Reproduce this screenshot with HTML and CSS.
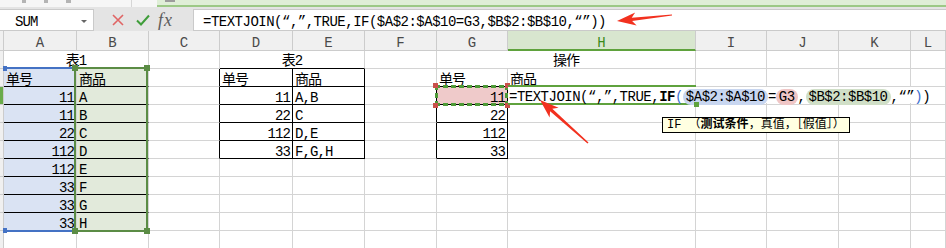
FILE: index.html
```html
<!DOCTYPE html>
<html lang="zh-CN">
<head>
    <meta charset="UTF-8">
    <title>TEXTJOIN</title>
    <link rel="stylesheet" href="styles.css">
</head>
<body>
<div class="app">
    <div class="topbar">
        <div class="tools"><i class="nub n1"></i><i class="nub n2"></i><i class="nub n3"></i><i class="sep"></i></div>
        <div class="tab"><i class="nub n4"></i></div>
    </div>

    <div class="fbar">
        <div class="namebox"><span>SUM</span><span class="caret"></span></div>
        <div class="fbtns">
            <svg width="12" height="12" viewBox="0 0 12 12"><path d="M1 1L11 11M11 1L1 11" stroke="#e06464" stroke-width="1.6" fill="none"/></svg>
            <svg width="14" height="13" viewBox="0 0 14 13"><path d="M1 6.5L5 10.5L13 1.5" stroke="#3f9d3a" stroke-width="2" fill="none"/></svg>
            <span class="fx">fx</span>
        </div>
        <div class="finput">=TEXTJOIN(“,”,TRUE,IF($A$2:$A$10=G3,$B$2:$B$10,“”))</div>
    </div>

    <div class="sheet">
        <div class="corner"></div>
        <div class="ch">A</div><div class="ch">B</div><div class="ch">C</div><div class="ch">D</div>
        <div class="ch">E</div><div class="ch">F</div><div class="ch">G</div><div class="ch on">H</div>
        <div class="ch">I</div><div class="ch">J</div><div class="ch">K</div><div class="ch">L</div>

        <!-- 1 -->
        <div class="rh"></div>
        <div class="c m2 t1">表1</div>
        <div class="c"></div>
        <div class="c m2 t1 kb">表2</div>
        <div class="c"></div>
        <div class="c m2 t1">操作</div>
        <div class="c"></div><div class="c"></div><div class="c"></div><div class="c"></div>

        <!-- 2 -->
        <div class="rh"></div>
        <div class="c fa kb">单号</div>
        <div class="c fb kb">商品</div>
        <div class="c kr"></div>
        <div class="c kb kr">单号</div>
        <div class="c kb kr">商品</div>
        <div class="c"></div>
        <div class="c kb">单号</div>
        <div class="c">商品</div>
        <div class="c"></div><div class="c"></div><div class="c"></div><div class="c"></div>

        <!-- 3 -->
        <div class="rh on"></div>
        <div class="c fa kb r">11</div>
        <div class="c fb kb">A</div>
        <div class="c kr"></div>
        <div class="c kb kr r">11</div>
        <div class="c kb kr">A,B</div>
        <div class="c kr"></div>
        <div class="c kb kr r fg">11</div>
        <div class="c"></div>
        <div class="c"></div><div class="c"></div><div class="c"></div><div class="c"></div>

        <!-- 4 -->
        <div class="rh"></div>
        <div class="c fa kb r">11</div>
        <div class="c fb kb">B</div>
        <div class="c kr"></div>
        <div class="c kb kr r">22</div>
        <div class="c kb kr">C</div>
        <div class="c kr"></div>
        <div class="c kb kr r">22</div>
        <div class="c"></div>
        <div class="c"></div><div class="c"></div><div class="c"></div><div class="c"></div>

        <!-- 5 -->
        <div class="rh"></div>
        <div class="c fa kb r">22</div>
        <div class="c fb kb">C</div>
        <div class="c kr"></div>
        <div class="c kb kr r">112</div>
        <div class="c kb kr">D,E</div>
        <div class="c kr"></div>
        <div class="c kb kr r">112</div>
        <div class="c"></div>
        <div class="c"></div><div class="c"></div><div class="c"></div><div class="c"></div>

        <!-- 6 -->
        <div class="rh"></div>
        <div class="c fa kb r">112</div>
        <div class="c fb kb">D</div>
        <div class="c kr"></div>
        <div class="c kb kr r">33</div>
        <div class="c kb kr">F,G,H</div>
        <div class="c kr"></div>
        <div class="c kb kr r">33</div>
        <div class="c"></div>
        <div class="c"></div><div class="c"></div><div class="c"></div><div class="c"></div>

        <!-- 7 -->
        <div class="rh"></div>
        <div class="c fa kb r">112</div>
        <div class="c fb kb">E</div>
        <div class="c"></div><div class="c"></div><div class="c"></div><div class="c"></div><div class="c"></div>
        <div class="c"></div><div class="c"></div><div class="c"></div><div class="c"></div><div class="c"></div>

        <!-- 8 -->
        <div class="rh"></div>
        <div class="c fa kb r">33</div>
        <div class="c fb kb">F</div>
        <div class="c"></div><div class="c"></div><div class="c"></div><div class="c"></div><div class="c"></div>
        <div class="c"></div><div class="c"></div><div class="c"></div><div class="c"></div><div class="c"></div>

        <!-- 9 -->
        <div class="rh"></div>
        <div class="c fa kb r">33</div>
        <div class="c fb kb">G</div>
        <div class="c"></div><div class="c"></div><div class="c"></div><div class="c"></div><div class="c"></div>
        <div class="c"></div><div class="c"></div><div class="c"></div><div class="c"></div><div class="c"></div>

        <!-- 10 -->
        <div class="rh"></div>
        <div class="c fa r">33</div>
        <div class="c fb">H</div>
        <div class="c"></div><div class="c"></div><div class="c"></div><div class="c"></div><div class="c"></div>
        <div class="c"></div><div class="c"></div><div class="c"></div><div class="c"></div><div class="c"></div>

        <!-- 11 -->
        <div class="rh"></div>
        <div class="c"></div><div class="c"></div><div class="c"></div><div class="c"></div><div class="c"></div><div class="c"></div>
        <div class="c"></div><div class="c"></div><div class="c"></div><div class="c"></div><div class="c"></div><div class="c"></div>

        <!-- 引用区域高亮 -->
        <div class="sel-a"><i class="hd-a top"></i><i class="hd-a bot"></i></div>
        <div class="sel-b"></div>
        <i class="hd-b" style="left:72px;top:34px"></i>
        <i class="hd-b" style="left:144px;top:34px"></i>
        <i class="hd-b" style="left:72px;top:197px"></i>
        <i class="hd-b" style="left:144px;top:197px"></i>

        <div class="sel-g"></div>
        <i class="hd-g" style="left:433px;top:52px"></i>
        <i class="hd-g" style="left:505px;top:52px"></i>
        <i class="hd-g" style="left:433px;top:72px"></i>
        <i class="hd-g" style="left:505px;top:72px"></i>

        <div class="edit">
            <div class="edit-text">=TEXTJOIN(“,”,TRUE,<b>IF</b><span class="pb">(</span><span class="ref ra">$A$2:$A$10</span>=<span class="ref rg">G3</span>,<span class="ref rb">$B$2:$B$10</span>,“”<span class="pb">)</span>)</div>
            <i class="edit-hd"></i>
        </div>

        <div class="tip">IF （<b>测试条件</b>，真值，［假值］）</div>
    </div>

    <svg class="arrows" width="946" height="248" viewBox="0 0 946 248">
        <polygon points="617,21 636.6,25.6 632.1,21 672,15.6 672,14.4 631.7,17.8 635.2,12.4" fill="#f2311f"/>
        <polygon points="540,100 549.6,117.6 550.1,111.2 587.5,143.5 588.5,142.5 552.3,108.8 558.6,107.8" fill="#f2311f"/>
    </svg>
</div>
</body>
</html>
```

FILE: styles.css
```css
body {
    margin: 0;
    background: #fff;
    color: #000;
    font-family: "Liberation Mono", "Noto Sans CJK SC", monospace;
    font-size: 14px;
}

.app {
    position: relative;
    width: 946px;
    height: 248px;
    overflow: hidden;
}

/* 顶部工具条残留 */
.topbar {
    display: flex;
    height: 7px;
    background: #f6f6f6;
}

.tools {
    width: 157px;
    display: flex;
    align-items: flex-start;
}

.nub {
    display: block;
    height: 3px;
    background: #b4b4b4;
}

.n1 { width: 4px; margin-left: 22px; }
.n2 { width: 4px; margin-left: 18px; }
.n3 { width: 5px; margin-left: 18px; }
.n4 { width: 10px; margin-left: 8px; height: 2px; background: #9c9c9c; }

.sep {
    display: block;
    width: 1px;
    height: 7px;
    margin-left: 60px;
    background: #d6d6d6;
}

.tab {
    flex: 1;
    display: flex;
    background: #dfeed7;
    border-bottom: 2px solid #9cc986;
}

/* 编辑栏 */
.fbar {
    display: flex;
    height: 24px;
    padding-top: 2px;
    box-sizing: border-box;
    background: #e4e4e4;
}

.namebox {
    width: 94px;
    height: 22px;
    box-sizing: border-box;
    display: flex;
    justify-content: space-between;
    padding: 4px 6px 0 15px;
    line-height: 16px;
    letter-spacing: -0.9px;
    background: #fff;
    border: 1px solid #cacaca;
    border-left: none;
}

.caret {
    width: 0;
    height: 0;
    margin-top: 6px;
    border-left: 3px solid transparent;
    border-right: 3px solid transparent;
    border-top: 3px solid #666;
}

.fbtns {
    width: 99px;
    display: flex;
    align-items: center;
    padding-left: 18px;
    gap: 12px;
    box-sizing: border-box;
}

.fx {
    margin-left: -4px;
    font-family: "Liberation Serif", serif;
    font-style: italic;
    font-size: 18px;
    color: #5c5c5c;
    letter-spacing: 1px;
}

.finput {
    flex: 1;
    height: 22px;
    box-sizing: border-box;
    padding: 4px 0 0 9px;
    line-height: 16px;
    letter-spacing: -0.5px;
    white-space: nowrap;
    background: #fff;
    border: 1px solid #cacaca;
    border-right: none;
}

/* 表格 */
.sheet {
    position: relative;
    display: grid;
    grid-template-columns: 4px 73px 72px 71px 73px 72px 72px 71px 188px 71px 72px 72px 35px;
    grid-template-rows: 20px repeat(11, 18px);
}

.corner,
.ch,
.rh {
    background: #f0f0f0;
    box-sizing: border-box;
    border-right: 1px solid #cccccc;
    border-bottom: 1px solid #cccccc;
}

.ch {
    text-align: center;
    color: #4a4a4a;
    padding-top: 5px;
    line-height: 14px;
}

.ch.on {
    background: #d8e6cf;
    color: #3b8a1c;
    border-bottom: 2px solid #5fa23d;
}

.rh.on {
    background: #6aab4b;
}

.c {
    box-sizing: border-box;
    border-right: 1px solid #d4d4d4;
    border-bottom: 1px solid #d4d4d4;
    padding: 4px 2px 0;
    line-height: 15px;
    white-space: nowrap;
    letter-spacing: -0.9px;
}

.m2 {
    grid-column: span 2;
    text-align: center;
}

.t1 { padding-top: 3px; }
.r { text-align: right; }
.kb { border-bottom-color: #000; }
.kr { border-right-color: #000; }
.fa { background: #dae3f3; }
.fb { background: #e2eadb; }
.fg { background: #efcaca; }

/* 公式引用的框 */
.sel-a {
    position: absolute;
    left: 5px;
    top: 36px;
    width: 70px;
    height: 165px;
    box-sizing: border-box;
    border-top: 2px solid #4472c4;
    border-bottom: 2px solid #4472c4;
}

.hd-a {
    position: absolute;
    left: -2px;
    width: 4px;
    height: 5px;
    background: #4472c4;
}

.hd-a.top { top: -3px; }
.hd-a.bot { bottom: -3px; }

.sel-b {
    position: absolute;
    left: 74px;
    top: 36px;
    width: 74px;
    height: 165px;
    box-sizing: border-box;
    border: 2px solid #5b8c45;
}

.hd-b {
    position: absolute;
    width: 6px;
    height: 6px;
    background: #5b8c45;
}

.sel-g {
    position: absolute;
    left: 435px;
    top: 54px;
    width: 73px;
    height: 21px;
    background:
        repeating-linear-gradient(90deg, #4e9a37 0 5px, transparent 5px 8px) top / 100% 3px no-repeat,
        repeating-linear-gradient(90deg, #4e9a37 0 5px, transparent 5px 8px) bottom / 100% 3px no-repeat,
        repeating-linear-gradient(180deg, #4e9a37 0 5px, transparent 5px 8px) left / 3px 100% no-repeat,
        repeating-linear-gradient(180deg, #4e9a37 0 5px, transparent 5px 8px) right / 3px 100% no-repeat;
}

.hd-g {
    position: absolute;
    width: 5px;
    height: 5px;
    background: #c9504a;
}

/* 单元格编辑状态 */
.edit {
    position: absolute;
    left: 508px;
    top: 54px;
    width: 188px;
    height: 20px;
    box-sizing: border-box;
    border-top: 2px solid #5fa23d;
    border-bottom: 2px solid #5fa23d;
}

.edit-text {
    width: max-content;
    height: 16px;
    box-sizing: border-box;
    padding: 5px 4px 0 1px;
    line-height: 11px;
    letter-spacing: -0.5px;
    white-space: nowrap;
    background: #fff;
}

.edit-text b {
    font-weight: bold;
}

.pb {
    color: #3c6fd0;
}

.ref {
    border-radius: 8px;
    padding: 0 3px;
}

.ra { background: #c8d6f0; }
.rg { background: #f0c6c6; }
.rb { background: #d0dfc7; }

.edit-hd {
    position: absolute;
    right: -3px;
    bottom: -4px;
    width: 5px;
    height: 5px;
    background: #5fa23d;
}

.tip {
    position: absolute;
    left: 662px;
    top: 86px;
    height: 16px;
    box-sizing: border-box;
    padding: 0 4px;
    line-height: 14px;
    font-size: 12px;
    white-space: nowrap;
    background: #ffffe1;
    border: 1px solid #000;
}

.arrows {
    position: absolute;
    left: 0;
    top: 0;
    pointer-events: none;
}
```
